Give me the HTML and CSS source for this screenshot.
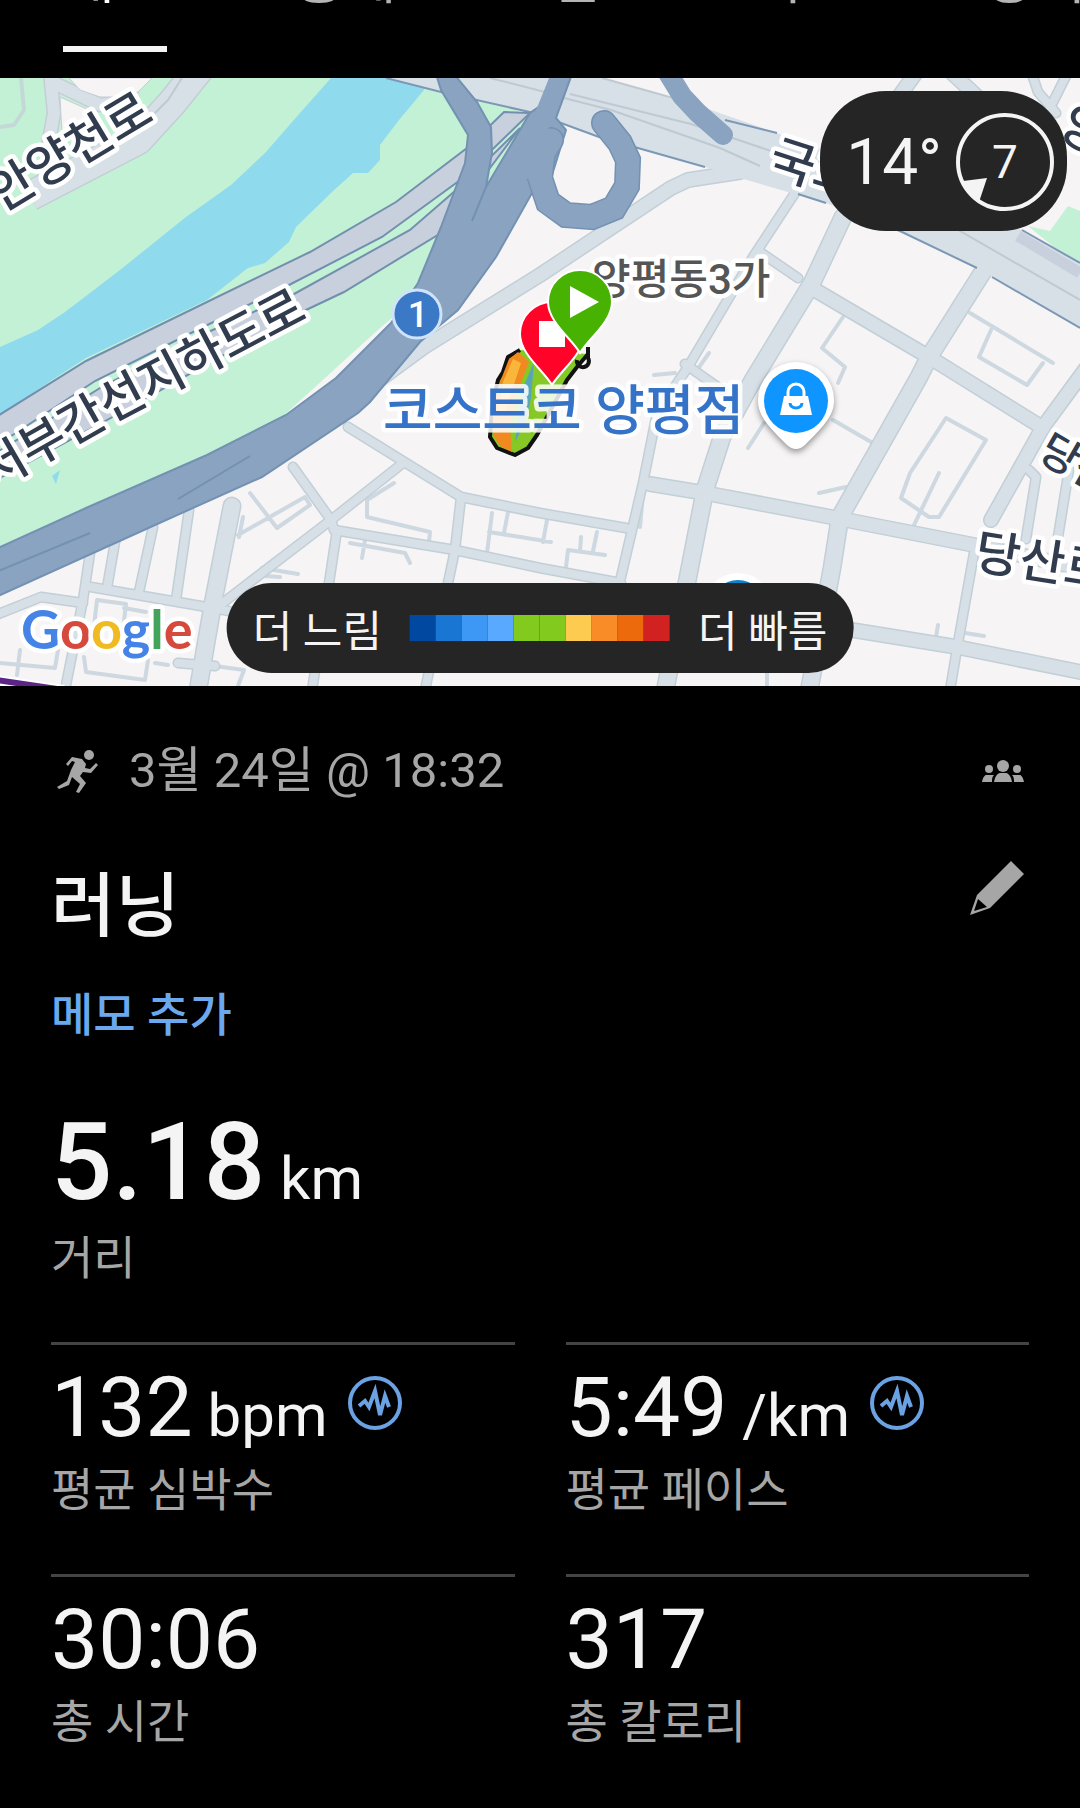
FILE: index.html
```html
<!DOCTYPE html>
<html lang="ko">
<head>
    <meta charset="UTF-8">
    <meta name="viewport" content="width=device-width, initial-scale=1.0">
    <title>러닝</title>
    <link rel="stylesheet" href="styles.css">
</head>
<body>
    <!-- Tabs -->
    <nav class="tabs">
        <button type="button" class="tab active">개요</button>
        <button type="button" class="tab">통계</button>
        <button type="button" class="tab">랩</button>
        <button type="button" class="tab">차트</button>
        <button type="button" class="tab">장비</button>
    </nav>

    <!-- Map Section -->
    <section class="map-section">
        <svg class="map" viewBox="0 0 1080 608" role="img" aria-label="지도">
            <defs>
                <!-- wide streets -->
                <path id="streets-wide" d="M843 139 L812 205 L753 302 L722 359 L705 412 L688 499 L666 608 M984 192 L929 279 L919 299 L840 439 L832 490 L810 608 M232 428 L213 525 L198 612"/>
                <!-- medium streets -->
                <path id="streets-mid" d="M740 94 L688 102 L671 110 L540 197 L424 269 L379 302 M815 212 L929 279 L1043 350 M650 406 L705 415 L836 440 L974 467 L1080 490 M852 552 L957 569 L1080 594 M1090 285 L1043 349 L991 442 M915 -4 L888 34 M953 -4 L1000 40"/>
                <!-- small streets -->
                <path id="streets-small" d="M795 115 L753 179 L688 289 L657 335 L643 405 L621 499 M760 174 L798 200 M626 450 L540 435 L461 419 L406 385 L348 349 M621 505 L540 490 L455 472 L334 452 L331 442 L293 389 M461 419 L455 472 L448 505 L425 612 M403 385 L331 442 L224 524 M337 452 L329 505 L312 612 M91 509 L224 532 L240 536 M189 432 L176 522 M153 449 L139 514 M115 464 L107 510 M90 475 L83 522 L65 612 M-4 537 L41 519 L83 525 M974 475 L958 565 L950 612 M685 286 L722 312 M1029 392 L1036 399 L1026 461 M1070 385 L1057 465 M1032 -4 L1038 14 L1056 35 M1067 -4 L1050 30 M178 585 L215 588"/>
            </defs>

            <rect width="1080" height="608" fill="#f6f4f5"/>
            <path d="M0 0H490L540 60L440 200L380 250L270 350L0 490Z" fill="#c3f1d5"/>
            <path d="M331 0L300 35L265 75L231 107L186 139L120 192L65 234L38 252L0 269V337L52 302L86 280L207 222L248 190L265 185L289 164L296 149L332 114L353 95L368 95L380 82V67L399 42L424 12L421 0Z" fill="#90daee"/>
            <path d="M52 398l8-6-4 14z" fill="#90daee"/>
            <path d="M1028 148L1050 153L1068 128L1080 133V190Z" fill="#c3f1d5"/>

            <!-- riverside roads -->
            <path d="M21 0L24 32L14 47L0 49" class="lane green-lane"/>
            <path d="M200 -10L172 25L138 62L86 89L30 118" class="river-edge" stroke-width="31"/>
            <path d="M50 -6L54 35L47 75M50 3L100 27L140 21" class="river-edge" stroke-width="15"/>
            <path d="M200 -10L172 25L138 62L86 89L30 118" class="river-road" stroke-width="28"/>
            <path d="M50 -6L54 35L47 75M50 3L100 27L140 21" class="river-road" stroke-width="12"/>
            <path d="M69 0H152L138 14L122 19H100L80 12Z" fill="#f6f4f5" stroke="#c5cdd5"/>
            <path d="M60 19L98 36L62 56Z" fill="#f6f4f5" stroke="#c5cdd5"/>
            <path d="M182 0L168 22L152 38" class="hair"/>

            <!-- streets -->
            <g class="lane">
                <path d="M250 415L277 450L310 427L305 419L238 457M243 439L239 459M394 405L367 422V439L430 454L429 464M350 465L405 475L410 485M365 462L362 480M492 435L487 475M508 434L504 455M489 454L551 464M547 442L543 464M605 477L568 472L566 489M581 459L580 473M597 454L593 473M643 415L640 449"/>
                <path d="M946 340L986 362L939 439H929L901 420L910 395ZM939 395L914 447M819 415L846 409M833 342L871 364M748 370L764 345M843 239L822 270L845 289L838 305M970 235L1053 285M991 252L979 279L1027 307L1043 285M654 297L675 295M709 275L697 292M938 547L936 559M965 555L984 558M767 592V608"/>
                <path d="M0 585L55 590L58 572M20 572L17 597M84 579L86 594L145 602L148 582M97 522L94 548M97 522L126 526L122 560M124 530L146 534M155 585L168 587M215 588L244 592L238 608M262 490L298 496M265 498L280 499"/>
            </g>
            <g class="casing">
                <use href="#streets-small" stroke-width="11"/>
                <use href="#streets-mid" stroke-width="16"/>
                <use href="#streets-wide" stroke-width="19"/>
            </g>
            <g class="road">
                <use href="#streets-small" stroke-width="8"/>
                <use href="#streets-mid" stroke-width="13"/>
                <use href="#streets-wide" stroke-width="16"/>
            </g>

            <!-- national road -->
            <path d="M386 0L441 14L534 35L599 59L705 89L740 100L826 125L902 154L977 190L1080 250V185L1022 152L777 55L691 25L602 0Z" fill="#d7e0e7"/>
            <path d="M386 0L441 14L534 35L599 59L705 89M798 116L826 125M860 136L902 154L977 190M992 199L1080 250M1080 185L1022 152M777 55L725 42" fill="none" stroke="#7c98b5" stroke-width="2"/>
            <path d="M490 0L545 14L564 20L611 32L720 70L760 88M570 16L691 46L777 75M602 0L691 25M920 130L1080 222" class="hair"/>
            <path d="M1018 158L1080 195" stroke="#c8d0dd" stroke-width="11"/>

            <!-- expressway, both carriageways -->
            <g fill="#c8d0dd" stroke="#7290ad" stroke-width="2">
                <path d="M-4 339L86 283L207 224L310 174L396 124L467 70L504 34L530 35L463 100L382 159L289 207L185 258L95 303L-4 368Z"/>
                <path d="M-4 375L100 310L190 262L294 216L410 152L463 106L520 50L441 155L344 214L306 232L200 290L120 335L-4 402Z"/>
            </g>
            <g fill="#8aa3c0" stroke="#7391b2" stroke-width="2">
                <path d="M-4 471L86 430L207 377L286 337L336 300L391 245L418 205L441 149L465 85L468 57L441 12L436 -4H454L477 24L491 49L492 75L486 109L530 35L540 28L552 -4H572L556 40L566 52L548 110L532 115L496 179L458 232L420 264L370 324L358 335L262 399L155 447L-4 519Z"/>
            </g>
            <g fill="none" stroke-linecap="round">
                <path d="M551 62L543 75L540 100L548 124L566 137L592 139L614 130L627 108L628 82L620 65L604 45" stroke="#7391b2" stroke-width="26"/>
                <path d="M551 62L543 75L540 100L548 124L566 137L592 139L614 130L627 108L628 82L620 65L604 45" stroke="#8aa3c0" stroke-width="23"/>
                <path d="M558 2L541 44L528 92" stroke="#8aa3c0" stroke-width="18"/>
                <path d="M668 -5L682 18L698 35L723 57" stroke="#8aa3c0" stroke-width="20"/>
            </g>
            <path d="M472 143L486 109M-4 494L90 455M178 421L250 378" fill="none" stroke="#7391b2" stroke-width="2"/>
            <path d="M-4 602L64 612" stroke="#fff" stroke-width="10"/>
            <path d="M-4 602L64 612" stroke="#5b2585" stroke-width="6"/>

            <!-- street names -->
            <path id="tunnel-line" d="M-88 460L46 382L127 336L309 240" fill="none"/>
            <g class="street-name">
                <text x="70" y="74" text-anchor="middle" dominant-baseline="central" transform="rotate(-31 70 74)">안양천로</text>
                <text text-anchor="end"><textPath href="#tunnel-line" startOffset="100%">서부간선지하도로</textPath></text>
                <text x="766" y="94" transform="rotate(18 766 94)">국회대로</text>
                <text x="973" y="490" transform="rotate(9 973 490)">당산로</text>
                <text x="1036" y="380" class="small-name" transform="rotate(30 1036 380)">당산</text>
                <text x="1056" y="56" transform="rotate(30 1056 56)">양평로</text>
            </g>
            <text x="592" y="216" class="district-name">양평동3가</text>

            <!-- route -->
            <path d="M520 272L508 279L503 294L498 302L492 329L490 359L497 370L515 377L528 370L537 357L547 339L567 302L577 289L588 276" fill="#86c926" stroke="#111" stroke-width="4" stroke-linejoin="round"/>
            <path d="M518 274L509 281L500 304L493 330V357L500 368L512 374L510 350L515 320L529 284Z" fill="#f08a20"/>
            <path d="M513 281L503 304L498 332L505 334L521 285Z" fill="#f9b63b"/>
            <path d="M534 284L523 310L517 350L515 364L525 345L531 320Z" fill="#57a5b9"/>
            <path d="M577 282a6 6 0 1 0 11-2v-11" fill="none" stroke="#111" stroke-width="4"/>

            <text x="383" y="352" class="place-name">코스트코 양평점</text>

            <!-- road number -->
            <circle cx="417" cy="236" r="24" fill="#3b78c6" stroke="#cfe3fb" stroke-width="3"/>
            <text x="418" y="249" class="road-number">1</text>

            <!-- place pins -->
            <circle cx="738" cy="529" r="34" fill="#fff"/>
            <circle cx="738" cy="529" r="27" fill="#1083c8"/>
            <path class="place-pin" d="M796 284a38 38 0 0 0-38 39c0 15 12 27 29 44q9 8 18 0c17-17 29-29 29-44a38 38 0 0 0-38-39z"/>
            <circle cx="796" cy="323" r="32" fill="#0f95ff"/>
            <path d="M784 318h24l4 19h-32z" fill="#fff"/>
            <path d="M788 319v-5a8 8 0 0 1 16 0v5" fill="none" stroke="#fff" stroke-width="3"/>
            <path d="M790 325a6 5 0 0 0 12 0" fill="none" stroke="#0f95ff" stroke-width="3"/>

            <!-- finish and start -->
            <path d="M552 307C544 293 520 276 520 256a32 32 0 0 1 64 0C584 276 560 293 552 307Z" fill="#ff0328" stroke="#fff" stroke-width="2"/>
            <rect x="539" y="243" width="26" height="26" fill="#fff"/>
            <path d="M580 275C572 261 548 244 548 224a32 32 0 0 1 64 0C612 244 588 261 580 275Z" fill="#47b202" stroke="#fff" stroke-width="2"/>
            <path d="M570 208L599 224L570 240Z" fill="#fff"/>

            <text x="21" y="571" class="google"><tspan fill="#4583e6">G</tspan><tspan fill="#d64a3e">o</tspan><tspan fill="#f0bb22">o</tspan><tspan fill="#4583e6">g</tspan><tspan fill="#42a45a">l</tspan><tspan fill="#d64a3e">e</tspan></text>
        </svg>

        <div class="weather">
            <span class="temperature">14°</span>
            <div class="wind">
                <svg viewBox="0 0 100 100" aria-hidden="true">
                    <circle cx="50" cy="50" r="47" fill="none" stroke="#f4f4f4" stroke-width="4"/>
                    <path d="M8 69L32 66L24 90Q13 82 8 69Z" fill="#f4f4f4"/>
                </svg>
                <span class="wind-speed">7</span>
            </div>
        </div>

        <div class="legend">
            <span>더 느림</span>
            <div class="legend-bar">
                <i class="pace-1"></i>
                <i class="pace-2"></i>
                <i class="pace-3"></i>
                <i class="pace-4"></i>
                <i class="pace-5"></i>
                <i class="pace-5"></i>
                <i class="pace-6"></i>
                <i class="pace-7"></i>
                <i class="pace-8"></i>
                <i class="pace-9"></i>
            </div>
            <span>더 빠름</span>
        </div>
    </section>

    <!-- Activity Section -->
    <main class="activity">
        <div class="meta">
            <svg class="run-icon" viewBox="0 0 42 44" aria-hidden="true">
                <circle cx="32" cy="6" r="5"/>
                <path d="M15 8L25 10L29 15L28 19L33 20L39 14L41 16L34 24L26 23L23 27L29 34L22 44L19 43L23 35L15 28L12 36L2 40L0 38L10 32L14 21L18 13L15 12L11 17L9 15Z"/>
            </svg>
            <span class="date">3월 24일 @ 18:32</span>
            <svg class="people-icon" viewBox="0 0 42 22" aria-hidden="true">
                <circle cx="21" cy="6" r="6"/>
                <path d="M12 22c1-6 4-9 6-9h6c2 0 5 3 6 9z"/>
                <circle cx="7" cy="9" r="4"/>
                <path d="M0 22c1-5 3-7 4-7h8c-2 2-2 4-2 7z"/>
                <circle cx="35" cy="9" r="4"/>
                <path d="M42 22c-1-5-3-7-4-7h-8c2 2 2 4 2 7z"/>
            </svg>
        </div>

        <div class="title-row">
            <h1>러닝</h1>
            <button type="button" class="edit-button" aria-label="수정">
                <svg viewBox="0 0 54 54" aria-hidden="true">
                    <path fill-rule="evenodd" d="M41 0L54 13L20 47L0 54L7 34ZM8 38L4 50L17 46Z"/>
                </svg>
            </button>
        </div>
        <a href="#" class="memo-link">메모 추가</a>

        <div class="distance">
            <div class="distance-value">5.18<span class="unit"> km</span></div>
            <div class="label">거리</div>
        </div>

        <div class="stats">
            <div class="stat">
                <div class="value-row">
                    <div class="value">132<span class="unit"> bpm</span></div>
                    <button type="button" class="chart-button" aria-label="심박수 차트">
                        <svg viewBox="0 0 54 54" aria-hidden="true">
                            <circle cx="27" cy="27" r="25"/>
                            <path d="M11 30L17 25L21 31L27 15L32 39L37 20L41 31"/>
                        </svg>
                    </button>
                </div>
                <div class="label">평균 심박수</div>
            </div>
            <div class="stat">
                <div class="value-row">
                    <div class="value">5:49<span class="unit"> /km</span></div>
                    <button type="button" class="chart-button" aria-label="페이스 차트">
                        <svg viewBox="0 0 54 54" aria-hidden="true">
                            <circle cx="27" cy="27" r="25"/>
                            <path d="M11 30L17 25L21 31L27 15L32 39L37 20L41 31"/>
                        </svg>
                    </button>
                </div>
                <div class="label">평균 페이스</div>
            </div>
            <div class="stat">
                <div class="value-row">
                    <div class="value">30:06</div>
                </div>
                <div class="label">총 시간</div>
            </div>
            <div class="stat">
                <div class="value-row">
                    <div class="value">317</div>
                </div>
                <div class="label">총 칼로리</div>
            </div>
        </div>
    </main>
</body>
</html>
```
FILE: styles.css
```css
body {
    margin: 0;
    background-color: #000;
    color: #f4f4f4;
    font-family: Roboto, "Noto Sans CJK KR", sans-serif;
}
button {
    padding: 0;
    border: none;
    background: none;
    color: inherit;
    font-family: inherit;
    cursor: pointer;
}
svg {
    display: block;
}

/* Tabs, scrolled partly off the top */
.tabs {
    display: flex;
    align-items: flex-end;
    height: 78px;
    overflow: hidden;
}
.tab {
    flex: 0 0 230px;
    height: 130px;
    padding-bottom: 68px;
    font-size: 56px;
    line-height: 62px;
    color: #b4b4b4;
}
.tab.active {
    color: #fff;
    background: linear-gradient(#f4f4f4, #f4f4f4) center bottom 26px / 104px 6px no-repeat;
}

/* Map */
.map-section {
    position: relative;
}
.map {
    width: 100%;
    height: auto;
}
.casing,
.road,
.lane,
.hair,
.river-edge,
.river-road {
    fill: none;
    stroke-linejoin: round;
}
.casing {
    stroke: #c2cfd7;
    stroke-linecap: round;
}
.road {
    stroke: #d7e0e7;
    stroke-linecap: round;
}
.lane {
    stroke: #cdd8e0;
    stroke-width: 4px;
    stroke-linecap: round;
}
.green-lane {
    stroke: #c5d8d8;
}
.river-edge {
    stroke: #c5cdd5;
}
.river-road {
    stroke: #d7e0e7;
}
.hair {
    stroke: #bfc9d2;
    stroke-width: 2px;
}
.street-name,
.district-name,
.place-name,
.google {
    stroke: #fff;
    stroke-width: 9px;
    stroke-linejoin: round;
    paint-order: stroke;
}
.street-name {
    font-size: 49px;
    font-weight: 500;
    fill: #313c4e;
}
.small-name {
    font-size: 42px;
}
.district-name {
    font-size: 42px;
    font-weight: 500;
    fill: #555;
}
.place-name {
    font-size: 54px;
    font-weight: 500;
    fill: #3473c8;
    stroke: rgba(255, 255, 255, 0.85);
}
.road-number {
    font-size: 36px;
    font-weight: 500;
    text-anchor: middle;
    fill: #fff;
}
.place-pin {
    fill: #fff;
    filter: drop-shadow(0 3px 3px rgba(0, 0, 0, 0.4));
}
.google {
    font-family: Lato, sans-serif;
    font-size: 54px;
    font-weight: 700;
}
.weather {
    position: absolute;
    top: 13px;
    right: 13px;
    display: flex;
    align-items: center;
    gap: 13px;
    box-sizing: border-box;
    height: 140px;
    padding: 2px 12px 0 26px;
    border-radius: 66px;
    background-color: #252525;
}
.temperature {
    font-size: 64px;
}
.wind {
    display: grid;
    place-items: center;
    width: 100px;
    height: 100px;
}
.wind svg,
.wind-speed {
    grid-area: 1 / 1;
}
.wind svg {
    width: 100px;
}
.wind-speed {
    font-size: 46px;
}
.legend {
    position: absolute;
    bottom: 13px;
    left: 50%;
    transform: translateX(-50%);
    display: flex;
    align-items: center;
    gap: 28px;
    height: 90px;
    padding: 0 26px;
    border-radius: 45px;
    background-color: #252525;
    font-size: 43px;
    white-space: nowrap;
}
.legend-bar {
    display: flex;
}
.legend-bar i {
    width: 26px;
    height: 26px;
}
.pace-1 { background-color: #0048a0; }
.pace-2 { background-color: #1976d2; }
.pace-3 { background-color: #3d97f5; }
.pace-4 { background-color: #58a9ff; }
.pace-5 { background-color: #82ca1e; }
.pace-6 { background-color: #fdcb4f; }
.pace-7 { background-color: #f98c27; }
.pace-8 { background-color: #ed6a0c; }
.pace-9 { background-color: #d22121; }

/* Activity */
.activity {
    padding: 57px 51px 0;
}
.meta {
    display: flex;
    align-items: center;
    gap: 30px;
    height: 56px;
    padding: 0 5px 0 6px;
    color: #a6a6a6;
}
.run-icon {
    width: 42px;
    fill: #a6a6a6;
}
.date {
    font-size: 49px;
    line-height: 56px;
}
.people-icon {
    width: 42px;
    margin-left: auto;
    fill: #a6a6a6;
}
.title-row {
    display: flex;
    justify-content: space-between;
    align-items: flex-start;
    margin-top: 62px;
    padding-right: 5px;
}
h1 {
    margin: 0;
    font-size: 70px;
    font-weight: 500;
    line-height: 92px;
}
.edit-button svg {
    width: 54px;
    fill: #a6a6a6;
}
.memo-link {
    display: block;
    margin-top: 34px;
    font-size: 46px;
    font-weight: 500;
    line-height: 56px;
    color: #6aa9f0;
    text-decoration: none;
}
.distance {
    margin-top: 56px;
}
.distance-value {
    font-size: 108px;
    font-weight: 500;
    line-height: 126px;
}
.distance .label {
    margin-top: 5px;
}
.unit {
    font-size: 60px;
    font-weight: 400;
    line-height: 60px;
}
.label {
    margin-top: 5px;
    font-size: 46px;
    line-height: 56px;
    color: #a6a6a6;
}
.stats {
    display: grid;
    grid-template-columns: 1fr 1fr;
    column-gap: 51px;
    margin-top: 56px;
}
.stat {
    padding: 13px 0 56px;
    border-top: 3px solid #444;
}
.value-row {
    display: flex;
    align-items: flex-start;
    gap: 20px;
}
.value {
    font-size: 84px;
    line-height: 99px;
}
.chart-button {
    padding-top: 18px;
}
.chart-button svg {
    width: 54px;
    fill: none;
    stroke: #6aa2e4;
    stroke-width: 4px;
}
```
